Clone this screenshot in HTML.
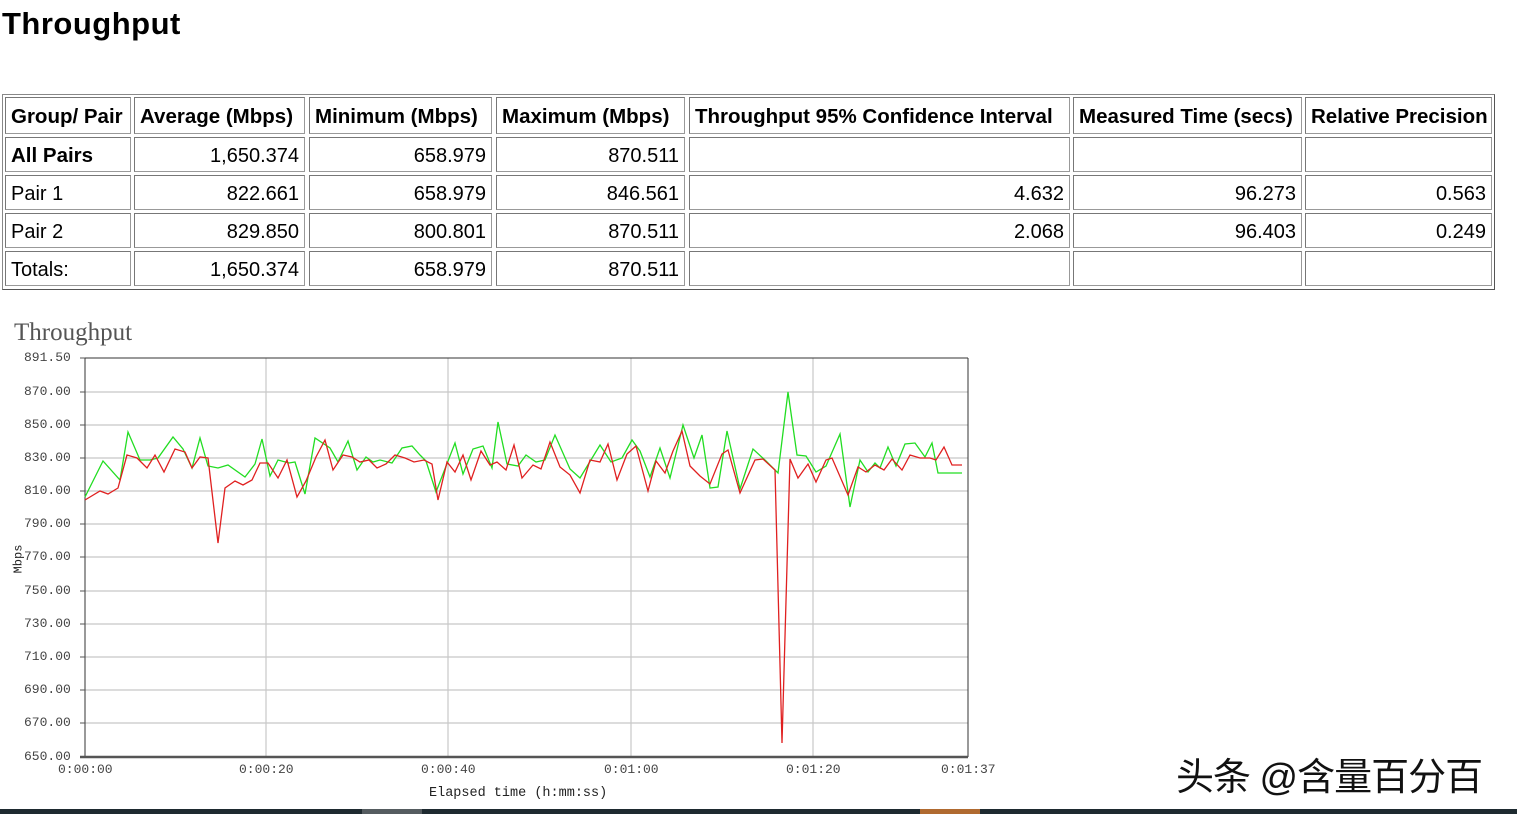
<!DOCTYPE html>
<html><head><meta charset="utf-8"><style>
body{margin:0;width:1517px;height:814px;background:#fff;position:relative;overflow:hidden;font-family:"Liberation Sans",sans-serif;color:#000}
.t{position:absolute;left:2px;top:6px;font-size:31px;font-weight:bold;letter-spacing:0.5px}
.tbl{position:absolute;left:2px;top:94px;width:1491px;height:194px;border:1px solid #888;border-right-color:#555;border-bottom-color:#555}
.c{position:absolute;box-sizing:border-box;border:1px solid #999;border-top-color:#777;border-left-color:#777;font-size:20px;padding:3px 5px 0 5px;white-space:nowrap;overflow:hidden}
.h{font-weight:bold;font-size:20.5px}
.r{text-align:right}
.ax{position:absolute;font-family:"Liberation Mono",monospace;font-size:13px;color:#444;white-space:nowrap}
</style></head><body>
<div class="t">Throughput</div>
<div class="tbl"></div>
<div id="cells"></div>
<script>
var cols=[[5,131],[134,305],[309,492],[496,685],[689,1070],[1073,1302],[1305,1492]];
var rows=[[97,134],[137,172],[175,210],[213,248],[251,286]];
var d=[["Group/ Pair","Average (Mbps)","Minimum (Mbps)","Maximum (Mbps)","Throughput 95% Confidence Interval","Measured Time (secs)","Relative Precision"],
["All Pairs","1,650.374","658.979","870.511","","",""],
["Pair 1","822.661","658.979","846.561","4.632","96.273","0.563"],
["Pair 2","829.850","800.801","870.511","2.068","96.403","0.249"],
["Totals:","1,650.374","658.979","870.511","","",""]];
var h="";
for(var i=0;i<5;i++)for(var j=0;j<7;j++){
var cl="c"+(i==0||(i==1&&j==0)?" h":"")+(i>0&&j>0?" r":"");
h+='<div class="'+cl+'" style="left:'+cols[j][0]+'px;top:'+rows[i][0]+'px;width:'+(cols[j][1]-cols[j][0])+'px;height:'+(rows[i][1]-rows[i][0])+'px;line-height:'+(rows[i][1]-rows[i][0]-5)+'px">'+d[i][j]+'</div>';}
document.getElementById("cells").innerHTML=h;
</script>
<div style="position:absolute;left:14px;top:319px;font-family:'Liberation Serif',serif;font-size:25px;color:#555">Throughput</div>
<svg style="position:absolute;left:0;top:0" width="1517" height="814">
<g stroke="#c8c8c8" stroke-width="1.2">
<line x1="85" y1="392" x2="968" y2="392"/><line x1="85" y1="425" x2="968" y2="425"/><line x1="85" y1="458" x2="968" y2="458"/><line x1="85" y1="491" x2="968" y2="491"/><line x1="85" y1="524" x2="968" y2="524"/><line x1="85" y1="557" x2="968" y2="557"/><line x1="85" y1="591" x2="968" y2="591"/><line x1="85" y1="624" x2="968" y2="624"/><line x1="85" y1="657" x2="968" y2="657"/><line x1="85" y1="690" x2="968" y2="690"/><line x1="85" y1="723" x2="968" y2="723"/>
<line x1="266" y1="358" x2="266" y2="757"/><line x1="448" y1="358" x2="448" y2="757"/><line x1="631" y1="358" x2="631" y2="757"/><line x1="813" y1="358" x2="813" y2="757"/>
</g>
<g stroke="#333" stroke-width="1"><line x1="85" y1="358" x2="968" y2="358"/><line x1="968" y1="358" x2="968" y2="757"/><line x1="85" y1="358" x2="85" y2="757"/></g>
<line x1="80" y1="757" x2="968" y2="757" stroke="#555" stroke-width="2.5"/>
<g stroke="#555"><line x1="80" y1="358" x2="85" y2="358"/><line x1="80" y1="392" x2="85" y2="392"/><line x1="80" y1="425" x2="85" y2="425"/><line x1="80" y1="458" x2="85" y2="458"/><line x1="80" y1="491" x2="85" y2="491"/><line x1="80" y1="524" x2="85" y2="524"/><line x1="80" y1="557" x2="85" y2="557"/><line x1="80" y1="591" x2="85" y2="591"/><line x1="80" y1="624" x2="85" y2="624"/><line x1="80" y1="657" x2="85" y2="657"/><line x1="80" y1="690" x2="85" y2="690"/><line x1="80" y1="723" x2="85" y2="723"/></g>
<polyline fill="none" stroke="#22dd22" stroke-width="1.3" points="85,497 103,461 120,480 128,432 140,460 150,460 158,458 173,437 183,449 192,468 200,438 208,466 218,468 228,465 245,477 255,464 262,439 270,476 278,460 289,463 295,462 305,494 315,438 330,448 338,462 348,441 357,470 366,457 373,462 380,460 392,463 402,448 412,446 420,455 426,461 436,492 455,443 463,474 473,449 483,446 492,468 498,422 507,464 518,466 526,455 536,462 545,460 555,435 570,469 580,478 600,445 611,462 622,458 632,440 640,451 650,477 660,448 670,478 683,425 694,458 702,435 710,488 718,487 727,431 740,489 753,449 766,461 778,473 788,392 797,455 806,456 816,472 826,466 840,434 850,507 860,460 868,472 875,463 880,468 888,447 896,466 905,444 915,443 925,457 932,443 938,473 962,473"/>
<polyline fill="none" stroke="#e02020" stroke-width="1.3" points="85,500 100,491 108,494 118,488 127,455 137,458 147,468 155,455 164,472 175,449 185,452 192,468 200,457 208,458 218,543 225,488 235,481 243,485 252,480 260,463 268,463 278,478 287,460 297,497 306,481 316,457 325,440 333,470 343,455 352,457 360,462 369,460 377,468 386,464 395,455 405,458 414,462 424,460 432,464 438,500 447,462 455,472 463,455 471,480 481,451 490,465 497,462 506,470 514,445 522,478 533,465 541,469 550,442 560,467 570,475 580,493 590,460 600,462 608,444 617,480 627,454 636,446 648,491 656,461 665,473 673,451 682,431 690,466 700,476 710,484 722,454 728,450 740,493 755,460 763,459 775,470 782,743 790,459 798,478 808,464 816,482 826,460 832,458 848,495 858,467 866,472 875,465 884,470 892,459 902,470 910,455 920,458 930,458 936,460 944,447 952,465 962,465"/>
<rect x="0" y="809" width="1517" height="5" fill="#1e2a30"/><rect x="362" y="809" width="60" height="5" fill="#555c60"/><rect x="920" y="809" width="60" height="5" fill="#b06a30"/>
</svg>
<div class="ax" style="left:24px;top:350px">891.50</div>
<div class="ax" style="left:24px;top:384px">870.00</div>
<div class="ax" style="left:24px;top:417px">850.00</div>
<div class="ax" style="left:24px;top:450px">830.00</div>
<div class="ax" style="left:24px;top:483px">810.00</div>
<div class="ax" style="left:24px;top:516px">790.00</div>
<div class="ax" style="left:24px;top:549px">770.00</div>
<div class="ax" style="left:24px;top:583px">750.00</div>
<div class="ax" style="left:24px;top:616px">730.00</div>
<div class="ax" style="left:24px;top:649px">710.00</div>
<div class="ax" style="left:24px;top:682px">690.00</div>
<div class="ax" style="left:24px;top:715px">670.00</div>
<div class="ax" style="left:24px;top:749px">650.00</div>
<div class="ax" style="left:4px;top:552px;transform:rotate(-90deg);transform-origin:center;font-size:12px;color:#222">Mbps</div>
<div class="ax" style="left:58px;top:762px">0:00:00</div>
<div class="ax" style="left:239px;top:762px">0:00:20</div>
<div class="ax" style="left:421px;top:762px">0:00:40</div>
<div class="ax" style="left:604px;top:762px">0:01:00</div>
<div class="ax" style="left:786px;top:762px">0:01:20</div>
<div class="ax" style="left:941px;top:762px">0:01:37</div>
<div class="ax" style="left:429px;top:786px;color:#222;font-size:13.5px">Elapsed time (h:mm:ss)</div>
<div style="position:absolute;left:1176px;top:746px;font-family:'Liberation Sans','Noto Sans CJK SC',sans-serif;font-size:38px;color:#111;white-space:nowrap;letter-spacing:-1px">头条 @含量百分百</div>
</body></html>
